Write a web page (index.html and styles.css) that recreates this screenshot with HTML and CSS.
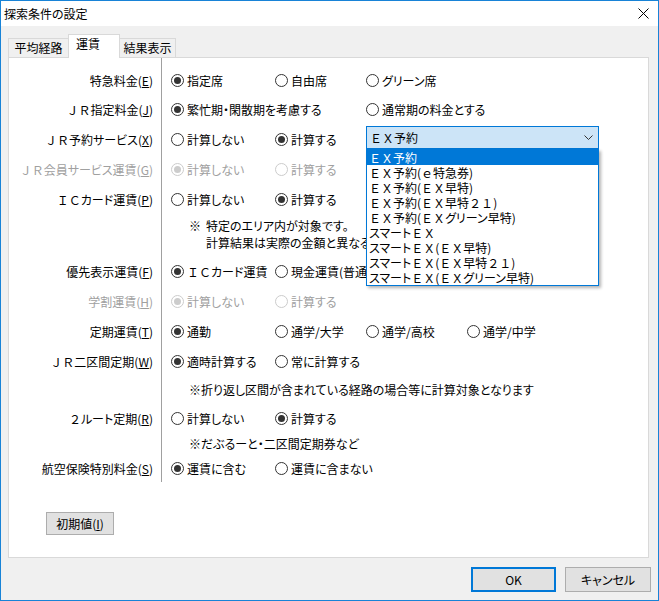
FILE: index.html
```html
<!DOCTYPE html>
<html lang="ja">

<head>
    <meta charset="UTF-8">
    <meta name="viewport" content="width=device-width, initial-scale=1.0">
    <title>探索条件の設定</title>
    <link rel="stylesheet" href="styles.css">
</head>

<body>
    <div class="window">
        <div class="titlebar">
            <span class="title">探索条件の設定</span>
            <span class="close">
                <svg width="11" height="11" viewBox="0 0 11 11">
                    <path d="M0.5 0.5L10.5 10.5M10.5 0.5L0.5 10.5" stroke="#000" stroke-width="1" fill="none" />
                </svg>
            </span>
        </div>

        <div class="tabs">
            <div class="tab first">平均経路</div>
            <div class="tab active">運賃</div>
            <div class="tab last">結果表示</div>
        </div>

        <div class="panel">
            <div class="form">
                <div class="row row-first">
                    <div class="label">特急料金(<u>E</u>)</div>
                    <div class="opts">
                        <label class="opt"><span class="radio on"></span>指定席</label>
                        <label class="opt"><span class="radio"></span>自由席</label>
                        <label class="opt"><span class="radio"></span>グリーン席</label>
                    </div>
                </div>

                <div class="row">
                    <div class="label"><span class="fw">ＪＲ</span>指定料金(<u>J</u>)</div>
                    <div class="opts">
                        <label class="opt"><span class="radio on"></span>繁忙期・閑散期を考慮する</label>
                        <label class="opt c3"><span class="radio"></span>通常期の料金とする</label>
                    </div>
                </div>

                <div class="row">
                    <div class="label"><span class="fw">ＪＲ</span>予約サービス(<u>X</u>)</div>
                    <div class="opts">
                        <label class="opt"><span class="radio"></span>計算しない</label>
                        <label class="opt"><span class="radio on"></span>計算する</label>
                        <div class="combo">
                            <span class="fw">ＥＸ予約</span>
                            <svg class="chevron" width="9" height="6" viewBox="0 0 9 6">
                                <path d="M0.5 0.5L4.5 4.5L8.5 0.5" stroke="#333" stroke-width="1" fill="none" />
                            </svg>
                            <ul class="list">
                                <li class="sel"><span class="fw">ＥＸ</span>予約</li>
                                <li><span class="fw">ＥＸ</span>予約(<span class="fw">ｅ</span>特急券)</li>
                                <li><span class="fw">ＥＸ</span>予約(<span class="fw">ＥＸ</span>早特)</li>
                                <li><span class="fw">ＥＸ</span>予約(<span class="fw">ＥＸ</span>早特<span class="fw">２１</span>)</li>
                                <li><span class="fw">ＥＸ</span>予約(<span class="fw">ＥＸ</span>グリーン早特)</li>
                                <li>スマート<span class="fw">ＥＸ</span></li>
                                <li>スマート<span class="fw">ＥＸ</span>(<span class="fw">ＥＸ</span>早特)</li>
                                <li>スマート<span class="fw">ＥＸ</span>(<span class="fw">ＥＸ</span>早特<span class="fw">２１</span>)</li>
                                <li>スマート<span class="fw">ＥＸ</span>(<span class="fw">ＥＸ</span>グリーン早特)</li>
                            </ul>
                        </div>
                    </div>
                </div>

                <div class="row disabled">
                    <div class="label"><span class="fw">ＪＲ</span>会員サービス運賃(<u>G</u>)</div>
                    <div class="opts">
                        <label class="opt"><span class="radio on"></span>計算しない</label>
                        <label class="opt"><span class="radio"></span>計算する</label>
                    </div>
                </div>

                <div class="row">
                    <div class="label"><span class="fw">ＩＣ</span>カード運賃(<u>P</u>)</div>
                    <div class="opts">
                        <label class="opt"><span class="radio"></span>計算しない</label>
                        <label class="opt"><span class="radio on"></span>計算する</label>
                    </div>
                </div>

                <div class="note note-ic">
                    <span class="mark">※</span>
                    <div class="clip">
                        <p>特定のエリア内が対象です。</p>
                        <p>計算結果は実際の金額と異なる</p>
                    </div>
                </div>

                <div class="row">
                    <div class="label">優先表示運賃(<u>F</u>)</div>
                    <div class="opts">
                        <label class="opt"><span class="radio on"></span><span class="fw">ＩＣ</span>カード運賃</label>
                        <label class="opt clip"><span class="radio"></span>現金運賃(普通</label>
                    </div>
                </div>

                <div class="row disabled">
                    <div class="label">学割運賃(<u>H</u>)</div>
                    <div class="opts">
                        <label class="opt"><span class="radio on"></span>計算しない</label>
                        <label class="opt"><span class="radio"></span>計算する</label>
                    </div>
                </div>

                <div class="row">
                    <div class="label">定期運賃(<u>T</u>)</div>
                    <div class="opts">
                        <label class="opt"><span class="radio on"></span>通勤</label>
                        <label class="opt"><span class="radio"></span>通学/大学</label>
                        <label class="opt"><span class="radio"></span>通学/高校</label>
                        <label class="opt"><span class="radio"></span>通学/中学</label>
                    </div>
                </div>

                <div class="row">
                    <div class="label"><span class="fw">ＪＲ</span>二区間定期(<u>W</u>)</div>
                    <div class="opts">
                        <label class="opt"><span class="radio on"></span>適時計算する</label>
                        <label class="opt"><span class="radio"></span>常に計算する</label>
                    </div>
                </div>

                <div class="note note-w">
                    <span class="mark">※</span>
                    <p>折り返し区間が含まれている経路の場合等に計算対象となります</p>
                </div>

                <div class="row">
                    <div class="label"><span class="fw">２</span>ルート定期(<u>R</u>)</div>
                    <div class="opts">
                        <label class="opt"><span class="radio"></span>計算しない</label>
                        <label class="opt"><span class="radio on"></span>計算する</label>
                    </div>
                </div>

                <div class="note note-r">
                    <span class="mark">※</span>
                    <p>だぶるーと・二区間定期券など</p>
                </div>

                <div class="row row-last">
                    <div class="label">航空保険特別料金(<u>S</u>)</div>
                    <div class="opts">
                        <label class="opt"><span class="radio on"></span>運賃に含む</label>
                        <label class="opt"><span class="radio"></span>運賃に含まない</label>
                    </div>
                </div>
            </div>

            <button class="reset">初期値(<u>I</u>)</button>
        </div>

        <div class="footer">
            <button class="btn default">OK</button>
            <button class="btn">キャンセル</button>
        </div>
    </div>
</body>

</html>
```

FILE: styles.css
```css
* {
    margin: 0;
    padding: 0;
    box-sizing: border-box;
}

body {
    font-family: "Noto Sans CJK JP", "Noto Sans", sans-serif;
    font-size: 12px;
    font-feature-settings: "palt";
    color: #000;
    background-color: #fff;
}

/* full-width latin keeps its full cell */
.fw {
    font-feature-settings: normal;
}

.window {
    width: 659px;
    height: 601px;
    border: 1px solid #1883d7;
    background-color: #f0f0f0;
}

/* title bar */
.titlebar {
    height: 25px;
    background-color: #fff;
    display: flex;
    align-items: center;
    padding: 0 9px 0 3px;
}

.close {
    margin-left: auto;
    display: flex;
}

/* tabs */
.tabs {
    display: flex;
    align-items: flex-end;
    height: 23px;
    margin: 8px 0 0 7px;
}

.tab {
    height: 19px;
    border: 1px solid #d9d9d9;
    border-bottom: none;
    line-height: 18px;
    text-align: center;
}

.tab.first {
    width: 60px;
    border-right: none;
}

.tab.active {
    width: 52px;
    height: 24px;
    margin-bottom: -1px;
    background-color: #fff;
    position: relative;
    text-align: left;
    padding: 0 0 0 7px;
    line-height: 17px;
}

.tab.last {
    width: 56px;
    border-left: none;
}

.panel {
    margin: 0 9px 0 7px;
    height: 501px;
    background-color: #fff;
    border: 1px solid #d9d9d9;
}

/* settings form */
.form {
    height: 424px;
    padding-top: 9px;
    background: linear-gradient(#a0a0a0, #a0a0a0) 152px 0 / 1px 100% no-repeat;
}

.row {
    display: flex;
    align-items: center;
    height: 30px;
}

.row-first {
    height: 27px;
}

.row-last {
    height: 28px;
}

.label {
    width: 152px;
    flex-shrink: 0;
    padding-right: 8px;
    display: flex;
    justify-content: flex-end;
    white-space: nowrap;
}

.opts {
    flex: 1;
    display: grid;
    grid-template-columns: 104px 91px 101px auto;
    align-items: center;
    padding-left: 10px;
}

.opt {
    display: flex;
    align-items: center;
    white-space: nowrap;
}

.opt.c3 {
    grid-column: 3;
}

/* text that runs under the open list */
.clip {
    overflow: hidden;
}

.note-ic .clip {
    width: 160px;
}

.radio {
    width: 13px;
    height: 13px;
    flex-shrink: 0;
    border: 1px solid #333;
    border-radius: 50%;
    background-color: #fff;
    margin-right: 3px;
    display: flex;
    align-items: center;
    justify-content: center;
}

.radio.on::after {
    content: "";
    width: 7px;
    height: 7px;
    border-radius: 50%;
    background-color: #333;
}

.disabled {
    color: #a0a0a0;
}

.disabled .radio {
    border-color: #cccccc;
}

.disabled .radio.on::after {
    background-color: #cccccc;
}

/* notes */
.note {
    display: flex;
    padding-left: 180px;
    white-space: nowrap;
}

.note .mark {
    width: 12px;
}

.note-ic {
    height: 42px;
    padding-top: 3px;
    line-height: 17px;
}

.note-ic .mark {
    width: 17px;
}

.note-w {
    height: 27px;
    align-items: center;
}

.note-r {
    height: 21px;
    align-items: center;
}

/* combo box with open list */
.combo {
    grid-column: 3 / span 2;
    position: relative;
    width: 233px;
    height: 23px;
    margin-bottom: 3px;
    display: flex;
    align-items: center;
    padding-left: 3px;
    background-color: #cce4f7;
    border: 1px solid #0078d7;
}

.chevron {
    margin-left: auto;
    margin-right: 5px;
}

.list {
    position: absolute;
    top: calc(100% + 1px);
    left: -1px;
    width: 233px;
    list-style: none;
    background-color: #fff;
    border: 1px solid #0078d7;
    box-shadow: 2px 2px 3px rgba(0, 0, 0, 0.3);
    z-index: 1;
}

.list li {
    height: 15px;
    line-height: 15px;
    padding-left: 2px;
    white-space: nowrap;
}

.list li.sel {
    background-color: #0078d7;
    color: #fff;
}

/* buttons */
.reset {
    display: block;
    margin: 30px 0 0 37px;
    width: 68px;
    height: 23px;
    font: inherit;
    color: #000;
    background-color: #e1e1e1;
    border: 1px solid #adadad;
}

.footer {
    display: flex;
    justify-content: flex-end;
    gap: 9px;
    padding: 9px 7px 0 0;
}

.btn {
    width: 86px;
    height: 25px;
    font: inherit;
    color: #000;
    background-color: #e1e1e1;
    border: 1px solid #adadad;
}

.btn.default {
    width: 85px;
    border: 2px solid #0078d7;
}
```
